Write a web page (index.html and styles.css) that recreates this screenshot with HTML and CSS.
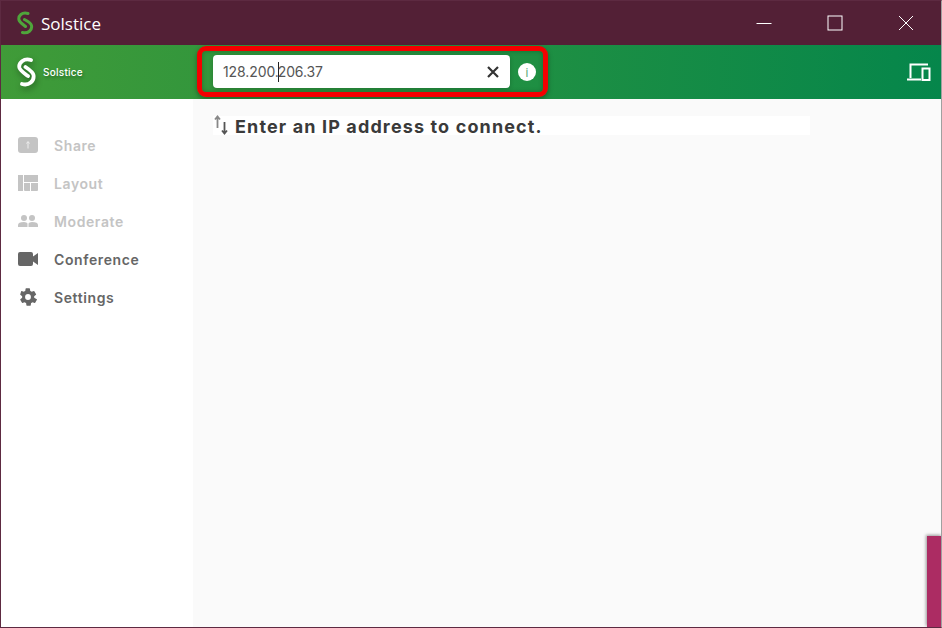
FILE: index.html
```html
<!DOCTYPE html>
<html lang="en">
<head>
<meta charset="utf-8">
<title>Solstice</title>
<link rel="stylesheet" href="styles.css">
</head>
<body>
<div class="window">
  <div class="titlebar">
    <svg class="title-logo" width="18" height="24" viewBox="0 0 18 24"><path d="M12 2.500C6 .5 2 5 3 9C3.700 11.500 6.500 13 9.500 15.500M6.500 21.500C12 23 16.500 19 15.500 14.500C15 12 12.500 10.500 8.500 8.500" fill="none" stroke="#4fa53b" stroke-width="3" stroke-linecap="round"/></svg>
    <span class="title-text">Solstice</span>
    <div class="win-controls">
      <svg class="win-btn" width="16" height="16" viewBox="0 0 16 16"><path d="M0.500 8.500H15.500" stroke="#fff" fill="none"/></svg>
      <svg class="win-btn" width="16" height="16" viewBox="0 0 16 16"><rect x="1" y="1" width="14" height="14" stroke="#fff" fill="none"/></svg>
      <svg class="win-btn" width="16" height="16" viewBox="0 0 16 16"><path d="M1 1L15 15M15 1L1 15" stroke="#fff" fill="none"/></svg>
    </div>
  </div>
  <header class="appbar">
    <div class="brand">
      <svg class="brand-logo" width="20" height="30" viewBox="0 0 20 30"><path d="M15 3C8 .5 2 6 3.500 11C4.500 14 8 16 12 19M6 27C13 29 18.500 24 17.500 18C17 15 14 13 9.500 10" fill="none" stroke="#fff" stroke-width="3.800" stroke-linecap="round"/></svg>
      <span class="brand-text">Solstice</span>
    </div>
    <div class="highlight">
      <div class="address">
        <span class="address-text">128.200.<span class="caret"></span>206.37</span>
        <svg class="clear" width="12" height="12" viewBox="0 0 12 12"><path d="M1 1L11 11M11 1L1 11" stroke="#333" stroke-width="2.200" fill="none"/></svg>
      </div>
      <div class="info">i</div>
    </div>
    <svg class="devices" width="24" height="19" viewBox="0 0 24 19"><path d="M3.500 15V1.500H21M0 16.500H14" stroke="#fff" stroke-width="2" fill="none"/><rect x="15.500" y="5.500" width="7" height="11.500" stroke="#fff" stroke-width="2" fill="none"/></svg>
  </header>
  <div class="body">
    <nav class="sidebar">
      <div class="nav-item off">
        <svg class="nav-icon" width="20" height="16" viewBox="0 0 20 16"><rect width="20" height="16" rx="3" fill="#c4c4c4"/><path d="M10 11.500V5M8.500 6.500L10 4.500L11.500 6.500" stroke="#eee" fill="none"/></svg>
        <span>Share</span>
      </div>
      <div class="nav-item off">
        <svg class="nav-icon" width="20" height="16" viewBox="0 0 20 16"><path d="M0 0H5V16H0ZM6 0H20V7H6ZM6 8H12V16H7Q6 16 6 15ZM13 8H20V15Q20 16 19 16H13Z" fill="#c4c4c4"/></svg>
        <span>Layout</span>
      </div>
      <div class="nav-item off">
        <svg class="nav-icon" width="20" height="16" viewBox="0 0 20 16"><circle cx="6" cy="5" r="3" fill="#c4c4c4"/><circle cx="14" cy="5" r="3" fill="#c4c4c4"/><path d="M0 14V12Q0 9 6 9Q9 9 9.500 10.500V14ZM10.500 14V10.500Q11 9 14 9Q20 9 20 12V14Z" fill="#c4c4c4"/></svg>
        <span>Moderate</span>
      </div>
      <div class="nav-item">
        <svg class="nav-icon" width="20" height="16" viewBox="0 0 20 16"><path d="M2 1H13Q15 1 15 3V5.500L20 2V14L15 10.500V13Q15 15 13 15H2Q0 15 0 13V3Q0 1 2 1Z" fill="#666"/></svg>
        <span>Conference</span>
      </div>
      <div class="nav-item">
        <svg class="nav-icon" width="20" height="20" viewBox="0 0 24 24"><path fill="#666" fill-rule="evenodd" d="M19.400 13a7.600 7.600 0 0 0 0-2l2.200-1.700a.5.500 0 0 0 .1-.7l-2.100-3.600a.5.500 0 0 0-.6-.2l-2.600 1a7.600 7.600 0 0 0-1.700-1l-.4-2.800a.5.500 0 0 0-.5-.4h-4.200a.5.500 0 0 0-.5.400l-.4 2.800a7.600 7.600 0 0 0-1.700 1l-2.600-1a.5.500 0 0 0-.6.200L2.700 8.600a.5.500 0 0 0 .1.700L5 11a7.600 7.600 0 0 0 0 2l-2.200 1.700a.5.500 0 0 0-.1.700l2.100 3.600a.5.500 0 0 0 .6.200l2.600-1a7.600 7.600 0 0 0 1.700 1l.4 2.800a.5.500 0 0 0 .5.400h4.200a.5.500 0 0 0 .5-.4l.4-2.800a7.600 7.600 0 0 0 1.700-1l2.600 1a.5.500 0 0 0 .6-.2l2.100-3.600a.5.500 0 0 0-.1-.7zM12 15.500a3.500 3.500 0 1 1 0-7 3.500 3.500 0 0 1 0 7z"/></svg>
        <span>Settings</span>
      </div>
    </nav>
    <main class="content">
      <div class="status">
        <svg class="status-icon" width="16" height="20" viewBox="0 0 16 20"><path d="M4.500 13V2M2 4.500L4.500 1.500L7 4.500" stroke="#888" stroke-width="1.800" fill="none"/><path d="M11.500 7V18M9 15.500L11.500 18.500L14 15.500" stroke="#555" stroke-width="1.800" fill="none"/></svg>
        <span class="status-text">Enter an IP address to connect.</span>
      </div>
    </main>
  </div>
  <div class="corner"></div>
</div>
</body>
</html>
```
FILE: styles.css
```css
* { box-sizing: border-box; }
html, body { margin: 0; height: 100%; }
body { font-family: "Inter", "Liberation Sans", sans-serif; overflow: hidden; }
.window {
  position: relative;
  width: 942px;
  height: 628px;
  display: flex;
  flex-direction: column;
  border-left: 1px solid #5d2a41;
  border-right: 1px solid #a0a0a0;
  border-bottom: 1px solid #5d2a41;
  border-top: 1px solid #5d2a41;
  overflow: hidden;
}
.titlebar {
  height: 44px;
  flex: none;
  background: #532036;
  display: flex;
  align-items: center;
  padding-left: 15px;
  color: #fff;
}
.title-logo { flex: none; margin-top: -1px; }
.title-text {
  font-family: "Open Sans", "Noto Sans", sans-serif;
  font-size: 17px;
  margin-left: 7px;
}
.win-controls {
  margin-left: auto;
  display: flex;
  align-items: center;
  gap: 55px;
  padding-right: 27px;
  margin-top: -1px;
}
.win-btn { display: block; }
.appbar {
  height: 54px;
  flex: none;
  display: flex;
  align-items: center;
  background: linear-gradient(90deg, #409b38 0%, #05864b 100%);
  padding-left: 16px;
  padding-right: 11px;
  margin-left: -1px;
  margin-right: -1px;
}
.brand {
  width: 181px;
  flex: none;
  display: flex;
  align-items: center;
  gap: 7px;
}
.brand-logo { filter: drop-shadow(1px 3px 3px rgba(0,0,0,.35)); }
.brand-text {
  color: #fff;
  font-size: 10px;
  font-weight: 500;
  letter-spacing: .25px;
  text-shadow: 1px 2px 3px rgba(0,0,0,.3);
}
.highlight {
  width: 351px;
  height: 51px;
  flex: none;
  margin-top: -1px;
  border: 5px solid #f40000;
  border-radius: 9px;
  box-shadow: 0 2px 5px rgba(0,0,0,.35), inset 0 0 5px rgba(0,0,0,.25);
  display: flex;
  align-items: center;
  padding-left: 11px;
  gap: 8px;
}
.address {
  width: 297px;
  height: 33px;
  background: #fff;
  border-radius: 4px;
  display: flex;
  align-items: center;
  justify-content: space-between;
  padding: 0 11px 0 10px;
  box-shadow: 0 1px 4px rgba(0,0,0,.2);
}
.address-text {
  font-size: 14px;
  color: #555;
  letter-spacing: -.1px;
  display: inline-flex;
  align-items: center;
}
.caret {
  width: 1px;
  height: 20px;
  background: #222;
  margin: 0 -1px 0 -1px;
}
.info {
  width: 18px;
  height: 18px;
  border-radius: 50%;
  background: #fff;
  color: #5aa877;
  font-size: 13px;
  line-height: 18px;
  text-align: center;
  font-family: "Open Sans", sans-serif;
}
.devices { margin-left: auto; }
.body { flex: 1; display: flex; min-height: 0; }
.sidebar {
  width: 192px;
  flex: none;
  background: #fff;
  padding-top: 27px;
  display: flex;
  flex-direction: column;
}
.nav-item {
  height: 38px;
  display: flex;
  align-items: center;
  padding-left: 17px;
  color: #666;
  font-size: 14px;
  font-weight: 600;
  letter-spacing: .6px;
  gap: 16px;
}
.nav-item.off { color: #c4c4c4; }
.nav-icon { width: 20px; flex: none; }
.content {
  flex: 1;
  background: #fafafa;
  padding: 17px 0 0 20px;
}
.status {
  width: 597px;
  height: 19px;
  background: #fff;
  display: flex;
  align-items: center;
  gap: 6px;
  font-size: 18px;
  font-weight: 700;
  letter-spacing: 1.13px;
  color: #3a3a3a;
}
.status-icon { flex: none; margin-top: -2px; }
.status-text { padding-top: 2px; }
.corner {
  position: absolute;
  right: -1px;
  bottom: 0;
  width: 15px;
  height: 91px;
  background: #ac2c63;
  box-shadow: -1px -1px 3px rgba(0,0,0,.4);
}
```
